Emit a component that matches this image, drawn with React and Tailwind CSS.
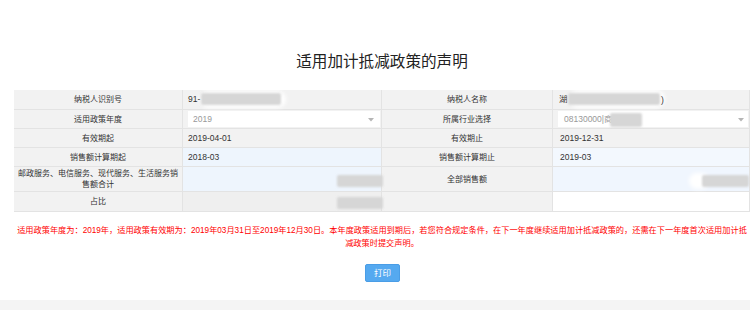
import React from "react";

function Label({ children, h }) {
  return (
    <div
      className={`flex items-center justify-center text-center px-[2px] text-[8px] leading-[11px] text-[#333] bg-[#f2f2f2] border-b border-r border-[#e3e3e3] ${h}`}
    >
      {children}
    </div>
  );
}

function Value({ children, h, bg, extra = "" }) {
  return (
    <div
      className={`relative flex items-center pl-[5px] text-[8.5px] text-[#333] border-b border-r border-[#e3e3e3] ${h} ${bg} ${extra}`}
    >
      {children}
    </div>
  );
}

function Blur({ className }) {
  return (
    <div className={`absolute bg-[#d6d6d6] blur-[1px] rounded-[2px] ${className}`} />
  );
}

function Arrow({ className }) {
  return (
    <svg
      className={`absolute ${className}`}
      width="6"
      height="4"
      viewBox="0 0 6 4"
    >
      <path d="M0 0 L6 0 L3 3.5 Z" fill="#b5b5b5" />
    </svg>
  );
}

export default function App() {
  return (
    <div className="w-[750px] h-[310px] overflow-hidden bg-white font-['Liberation_Sans','Noto_Sans_CJK_SC',sans-serif]">
      <div className="ml-[14px] w-[736px]">
        <div className="mt-[52px] h-[20px] leading-[20px] text-center text-[15.6px] text-[#222]">
          适用加计抵减政策的声明
        </div>

        <div className="mt-[18px] grid grid-cols-[169px_199px_171px_197px]">
          {/* Row 1 */}
          <Label h="h-[20px]">纳税人识别号</Label>
          <Value h="h-[20px]" bg="bg-[#f2f2f2]">
            <div className="absolute left-[17px] top-[1px] w-[86px] h-[17px] bg-white blur-[2px] rounded-full" />
            <span className="relative">91-</span>
            <Blur className="left-[18px] top-[3px] w-[80px] h-[12px]" />
          </Value>
          <Label h="h-[20px]">纳税人名称</Label>
          <Value h="h-[20px]" bg="bg-[#f2f2f2]" extra="pl-[6px]">
            <div className="absolute left-[16px] top-[0px] w-[96px] h-[18px] bg-white blur-[2px] rounded-full" />
            <span className="relative">湖</span>
            <Blur className="left-[15px] top-[3px] w-[92px] h-[12px]" />
            <span className="absolute left-[108px] top-[4px]">)</span>
          </Value>

          {/* Row 2 */}
          <Label h="h-[19px]">适用政策年度</Label>
          <Value h="h-[19px]" bg="bg-[#f2f2f2]" extra="p-[1px]">
            <div className="flex items-center w-full h-full bg-white pl-[5px] text-[#999]">
              2019
            </div>
            <Arrow className="right-[7px] top-[8px]" />
          </Value>
          <Label h="h-[19px]">所属行业选择</Label>
          <Value h="h-[19px]" bg="bg-[#f2f2f2]" extra="p-[1px]">
            <div className="flex items-center w-full h-full bg-white pl-[6px] text-[#999]">
              08130000|商
            </div>
            <Blur className="left-[57px] top-[3px] w-[32px] h-[14px]" />
            <Arrow className="right-[5px] top-[8px]" />
          </Value>

          {/* Row 3 */}
          <Label h="h-[19px]">有效期起</Label>
          <Value h="h-[19px]" bg="bg-[#f2f2f2]">2019-04-01</Value>
          <Label h="h-[19px]">有效期止</Label>
          <Value h="h-[19px]" bg="bg-[#f2f2f2]" extra="pl-[7px]">2019-12-31</Value>

          {/* Row 4 */}
          <Label h="h-[19px]">销售额计算期起</Label>
          <Value h="h-[19px]" bg="bg-[#eef5fd]">2018-03</Value>
          <Label h="h-[19px]">销售额计算期止</Label>
          <Value h="h-[19px]" bg="bg-[#f3f8fe]" extra="pl-[7px]">2019-03</Value>

          {/* Row 5 */}
          <Label h="h-[25px]">邮政服务、电信服务、现代服务、生活服务销售额合计</Label>
          <Value h="h-[25px]" bg="bg-[#eef5fd]">
            <Blur className="right-[-2px] top-[8px] w-[46px] h-[12px]" />
          </Value>
          <Label h="h-[25px]">全部销售额</Label>
          <Value h="h-[25px]" bg="bg-[#f0f6fe]">
            <div className="absolute right-[40px] top-[6px] w-[20px] h-[16px] bg-white blur-[2px] rounded-full" />
            <Blur className="right-[0px] top-[8px] w-[47px] h-[12px]" />
          </Value>

          {/* Row 6 */}
          <Label h="h-[20px]">占比</Label>
          <Value h="h-[20px]" bg="bg-[#efefef]">
            <Blur className="right-[-2px] top-[5px] w-[46px] h-[12px]" />
          </Value>
          <Label h="h-[20px]"></Label>
          <Value h="h-[20px]" bg="bg-white"></Value>
        </div>

        <p className="mt-[12px] text-center text-[8.2px] leading-[13px] text-[#ff0000]">
          适用政策年度为：2019年，适用政策有效期为：2019年03月31日至2019年12月30日。本年度政策适用到期后，若您符合规定条件，在下一年度继续适用加计抵减政策的，还需在下一年度首次适用加计抵减政策时提交声明。
        </p>

        <div className="mt-[14px] flex justify-center">
          <button className="ml-[1px] w-[35px] h-[18px] rounded-[2px] bg-[#55a9f0] border border-[#4a9de6] text-white text-[8.5px] leading-[16px]">
            打印
          </button>
        </div>
      </div>
      <div className="mt-[18px] h-[20px] bg-[#f4f4f4]" />
    </div>
  );
}
